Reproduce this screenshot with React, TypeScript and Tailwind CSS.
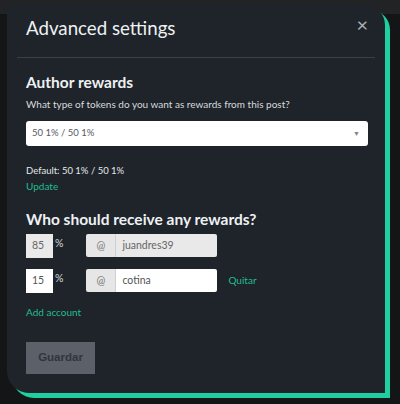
import React from "react";

export default function App() {
  const font = { fontFamily: "Lato, 'Noto Sans', sans-serif" };
  return (
    <div className="w-[400px] h-[404px] bg-[#141516] relative overflow-hidden" style={font}>
      <div className="h-[14px] bg-[#222324]" />
      <div className="absolute left-[7px] top-[5px] w-[378px] h-[388px] bg-[#1e242a] rounded-tr-[20px] rounded-bl-[22px] shadow-[5px_5px_0_0_#1fcf9f] flex flex-col">
        <div className="flex items-start justify-between pl-[19px] pr-[17px] pt-[10px] h-[52px]">
          <h1 className="text-[18.7px] text-[#eef1f3] leading-[26px]">Advanced settings</h1>
          <button className="text-[#a9b0b6] text-[20px] leading-none mt-[-1px]">×</button>
        </div>
        <div className="mx-[10px] h-px bg-[#3a4148]" />
        <div className="px-[19px] pt-[14px] flex flex-col">
          <h2 className="text-[15.5px] font-bold text-[#eef1f3] leading-[20px]">Author rewards</h2>
          <p className="text-[10px] text-[#d7dbde] mt-[5px] leading-[14px]">What type of tokens do you want as rewards from this post?</p>
          <div className="mt-[10px] h-[25px] w-[342px] bg-white rounded-[3px] flex items-center justify-between px-[6px]">
            <span className="text-[9.5px] text-[#555b61]">50 1% / 50 1%</span>
            <span className="text-[7px] text-[#80858a] mr-[2px]">▼</span>
          </div>
          <p className="text-[9.5px] text-[#e4e7e9] mt-[18px] leading-[14px]">Default: 50 1% / 50 1%</p>
          <a className="text-[10px] text-[#22bd92] mt-[1px] leading-[14px]">Update</a>
          <h2 className="text-[15.5px] font-bold text-[#eef1f3] leading-[20px] mt-[16px]">Who should receive any rewards?</h2>
          <div className="flex items-start mt-[5px] h-[24px]">
            <div className="w-[27px] h-[24px] bg-[#e9e9e9] text-[10.5px] text-[#666] flex items-center pl-[6px]">85</div>
            <span className="text-[10.5px] text-[#d7dbde] ml-[2px] mt-[2px]">%</span>
            <div className="ml-[23px] w-[30px] h-[23px] bg-[#e6e6e6] rounded-l-[2px] border-r border-[#d0d0d0] text-[10.5px] text-[#777] flex items-center justify-center">@</div>
            <div className="w-[101px] h-[23px] bg-[#e9e9e9] rounded-r-[2px] text-[10.5px] text-[#666] flex items-center pl-[6px]">juandres39</div>
          </div>
          <div className="flex items-start mt-[11px] h-[24px]">
            <div className="w-[27px] h-[24px] bg-white text-[10.5px] text-[#555] flex items-center pl-[6px]">15</div>
            <span className="text-[10.5px] text-[#d7dbde] ml-[2px] mt-[2px]">%</span>
            <div className="ml-[23px] w-[30px] h-[23px] bg-[#e6e6e6] rounded-l-[2px] border-r border-[#d0d0d0] text-[10.5px] text-[#777] flex items-center justify-center">@</div>
            <div className="w-[101px] h-[23px] bg-white rounded-r-[2px] text-[10.5px] text-[#555] flex items-center pl-[6px]">cotina</div>
            <a className="ml-[11px] text-[10px] text-[#22bd92] leading-[23px]">Quitar</a>
          </div>
          <a className="text-[10px] text-[#22bd92] mt-[12px] leading-[14px]">Add account</a>
          <button className="mt-[23px] w-[69px] h-[32px] bg-[#5b6069] text-[#31363d] text-[11.5px] font-bold" style={{ fontFamily: "'Liberation Sans', Arial, sans-serif" }}>Guardar</button>
        </div>
      </div>
    </div>
  );
}
